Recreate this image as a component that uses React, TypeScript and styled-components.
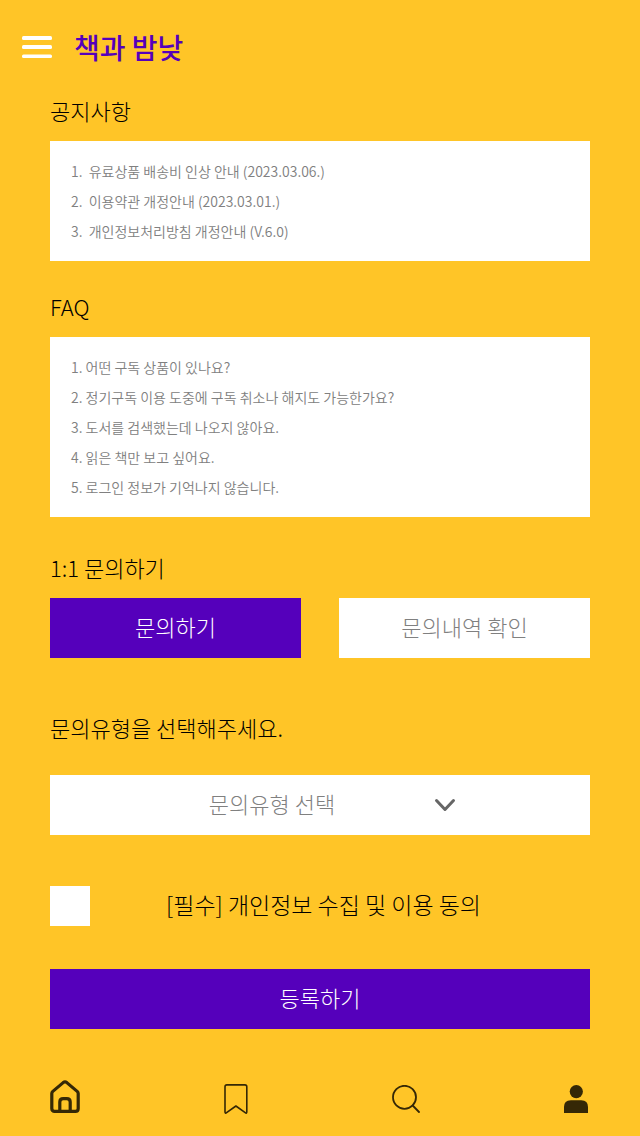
import React, { useState } from 'react';
import styled, { createGlobalStyle } from 'styled-components';

const GlobalStyle = createGlobalStyle`
  * { box-sizing: border-box; }
  body {
    margin: 0;
    background: #ffc527;
    color: #000;
    font-family: "Noto Sans CJK KR", "Noto Sans", sans-serif;
    font-weight: 300;
  }
  button, select, input { font: inherit; }
`;

const Page = styled.div`
  min-height: 100vh;
  display: flex;
  flex-direction: column;
`;

const Header = styled.header`
  display: flex;
  align-items: center;
  gap: 22px;
  padding: 27px 22px 28px;
`;

const MenuButton = styled.button`
  display: flex;
  padding: 0;
  border: 0;
  background: none;
  cursor: pointer;
`;

const Brand = styled.h1`
  margin: 0;
  font-size: 28px;
  line-height: 40px;
  font-weight: 500;
  color: #5500bb;
`;

const Main = styled.main`
  display: flex;
  flex-direction: column;
  padding: 0 50px;
`;

const Section = styled.section<{ $after: number }>`
  display: flex;
  flex-direction: column;
  gap: 16px;
  margin-bottom: ${(p) => p.$after}px;
`;

const Heading = styled.h2`
  margin: 0;
  font-size: 22px;
  line-height: 30px;
  font-weight: inherit;
`;

const Card = styled.ol`
  list-style: none;
  margin: 0;
  padding: 15px 21px;
  background: #fff;
`;

const Row = styled.li`
  font-size: 14px;
  line-height: 30px;
  font-weight: 350;
`;

const RowLink = styled.a`
  color: #808080;
  text-decoration: none;
  white-space: pre-wrap;
`;

const ButtonPair = styled.div`
  display: grid;
  grid-template-columns: 1fr 1fr;
  gap: 38px;
`;

const Button = styled.button<{ $primary?: boolean }>`
  height: 60px;
  padding: 0 0 4px;
  border: 0;
  font-size: 22px;
  color: ${(p) => (p.$primary ? '#fff' : '#808080')};
  background: ${(p) => (p.$primary ? '#5500bb' : '#fff')};
  cursor: pointer;
`;

const Form = styled.form`
  display: flex;
  flex-direction: column;
`;

const TypeLabel = styled.label`
  margin-bottom: 33px;
  font-size: 22px;
  line-height: 30px;
`;

const SelectWrap = styled.div`
  position: relative;
  display: flex;
  margin-bottom: 51px;
`;

const Select = styled.select`
  appearance: none;
  flex: 1;
  height: 60px;
  padding: 0 96px 4px 0;
  border: 0;
  border-radius: 0;
  background: #fff;
  color: #808080;
  font-size: 22px;
  text-align: center;
  text-align-last: center;
`;

const Chevron = styled.svg`
  position: absolute;
  right: 134px;
  top: 23px;
  pointer-events: none;
`;

const Consent = styled.label`
  display: flex;
  align-items: center;
  gap: 76px;
  margin-bottom: 43px;
  font-size: 23px;
  line-height: 30px;
`;

const ConsentText = styled.span`
  padding-bottom: 4px;
`;

const CheckBox = styled.input`
  appearance: none;
  flex: none;
  width: 40px;
  height: 40px;
  margin: 0;
  background: #fff;
  &:checked {
    background: #5500bb;
    border: 8px solid #fff;
  }
`;

const Nav = styled.nav`
  display: flex;
  align-items: center;
  justify-content: space-between;
  margin-top: auto;
  padding: 48px 52px 18px 50px;
`;

const NavLink = styled.a`
  display: flex;
  color: #352806;
`;

const notices = [
  '유료상품 배송비 인상 안내 (2023.03.06.)',
  '이용약관 개정안내 (2023.03.01.)',
  '개인정보처리방침 개정안내 (V.6.0)',
];

const faqs = [
  '어떤 구독 상품이 있나요?',
  '정기구독 이용 도중에 구독 취소나 해지도 가능한가요?',
  '도서를 검색했는데 나오지 않아요.',
  '읽은 책만 보고 싶어요.',
  '로그인 정보가 기억나지 않습니다.',
];

const LinkList = ({ items, gap }: { items: string[]; gap: string }) => (
  <Card>
    {items.map((text, i) => (
      <Row key={text}>
        <RowLink href="#">{`${i + 1}.${gap}${text}`}</RowLink>
      </Row>
    ))}
  </Card>
);

export default function App() {
  const [agreed, setAgreed] = useState(false);

  return (
    <Page>
      <GlobalStyle />
      <Header>
        <MenuButton type="button" aria-label="메뉴">
          <svg width="30" height="22" viewBox="0 0 30 22" fill="#fff">
            <rect width="30" height="4" rx="1.5" />
            <rect y="9" width="30" height="4" rx="1.5" />
            <rect y="18.5" width="30" height="3.5" rx="1.5" />
          </svg>
        </MenuButton>
        <Brand>책과 밤낮</Brand>
      </Header>

      <Main>
        <Section $after={30}>
          <Heading>공지사항</Heading>
          <LinkList items={notices} gap="  " />
        </Section>

        <Section $after={35}>
          <Heading>FAQ</Heading>
          <LinkList items={faqs} gap=" " />
        </Section>

        <Section $after={54}>
          <Heading>1:1 문의하기</Heading>
          <ButtonPair>
            <Button type="button" $primary>문의하기</Button>
            <Button type="button">문의내역 확인</Button>
          </ButtonPair>
        </Section>

        <Form onSubmit={(e) => e.preventDefault()}>
          <TypeLabel htmlFor="type">문의유형을 선택해주세요.</TypeLabel>
          <SelectWrap>
            <Select id="type" defaultValue="">
              <option value="">문의유형 선택</option>
            </Select>
            <Chevron width="22" height="14" viewBox="0 0 22 14" fill="none" stroke="#666" strokeWidth="3" strokeLinecap="round" strokeLinejoin="round">
              <path d="M2.5 2.5 11 11.5 19.5 2.5" />
            </Chevron>
          </SelectWrap>
          <Consent>
            <CheckBox type="checkbox" checked={agreed} onChange={(e) => setAgreed(e.target.checked)} />
            <ConsentText>[필수] 개인정보 수집 및 이용 동의</ConsentText>
          </Consent>
          <Button type="submit" $primary>등록하기</Button>
        </Form>
      </Main>

      <Nav>
        <NavLink href="#" aria-label="홈">
          <svg width="30" height="38" viewBox="0 0 30 38" fill="none" stroke="currentColor" strokeWidth="3.2" strokeLinejoin="round">
            <path d="M1.8 13.5Q1.8 12.3 2.8 11.4L13.2 2.6Q15 1.2 16.8 2.6L27.2 11.4Q28.2 12.3 28.2 13.5V28.5Q28.2 31.4 25.3 31.4H4.7Q1.8 31.4 1.8 28.5Z" />
            <path d="M9.8 31V22Q9.8 18.6 13.2 18.6H16.8Q20.2 18.6 20.2 22V31" />
          </svg>
        </NavLink>
        <NavLink href="#" aria-label="북마크">
          <svg width="24" height="30" viewBox="0 0 24 30" fill="none" stroke="currentColor" strokeWidth="1.6" strokeLinejoin="round">
            <path d="M1 2.8Q1 .9 2.9 .9H20.9Q22.8 .9 22.8 2.8V27.8Q22.8 29.8 21.2 28.7L11.9 22 2.6 28.7Q1 29.8 1 27.8Z" />
          </svg>
        </NavLink>
        <NavLink href="#" aria-label="검색">
          <svg width="28" height="28" viewBox="0 0 28 28" fill="none" stroke="currentColor" strokeWidth="1.8" strokeLinecap="round">
            <circle cx="12.5" cy="12.3" r="11.5" />
            <path d="M20.7 20.5 27 27" />
          </svg>
        </NavLink>
        <NavLink href="#" aria-label="내 정보">
          <svg width="24" height="28" viewBox="0 0 24 28" fill="currentColor">
            <circle cx="12.3" cy="6.6" r="6.6" />
            <path d="M0 28V22Q0 15.2 6.8 15.2H17.2Q24 15.2 24 22V28Z" />
          </svg>
        </NavLink>
      </Nav>
    </Page>
  );
}
